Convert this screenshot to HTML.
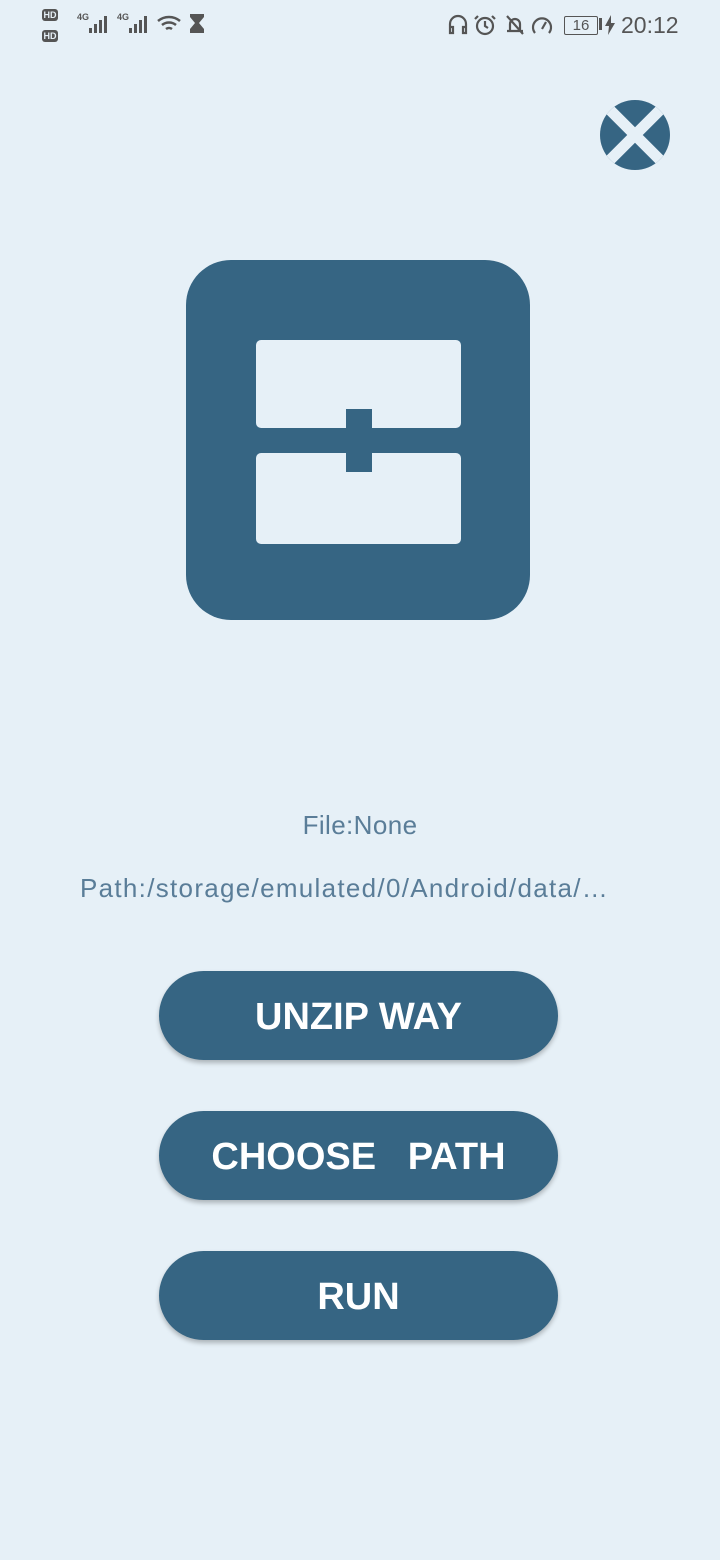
<!DOCTYPE html>
<html><head><meta charset="utf-8"><style>
html,body{margin:0;padding:0;}
body{width:720px;height:1560px;background:#e6f0f7;position:relative;overflow:hidden;font-family:"Liberation Sans",sans-serif;}
.sb{position:absolute;top:0;left:0;width:720px;height:50px;color:#555;}
.txt{position:absolute;left:0;width:720px;text-align:center;color:#5a7d98;font-size:26px;}
.btn{position:absolute;left:159px;width:399px;height:89px;border-radius:45px;background:#366583;color:#fff;font-size:38px;font-weight:bold;text-align:center;line-height:93px;box-shadow:0 3px 5px rgba(0,0,0,0.25);}
</style></head><body>
<div class="sb">
<div style="position:absolute;left:42px;top:9px;width:16px;height:12px;background:#555;border-radius:3px;color:#e6f0f7;font-size:9px;font-weight:bold;line-height:12px;text-align:center">HD</div>
<div style="position:absolute;left:42px;top:30px;width:16px;height:12px;background:#555;border-radius:3px;color:#e6f0f7;font-size:9px;font-weight:bold;line-height:12px;text-align:center">HD</div>
<div style="position:absolute;left:77px;top:12px;font-size:9px;font-weight:bold">4G</div>
<svg style="position:absolute;left:88px;top:14px" width="24" height="20"><rect x="1" y="14" width="3" height="5" fill="#555"/><rect x="6" y="10" width="3" height="9" fill="#555"/><rect x="11" y="6" width="3" height="13" fill="#555"/><rect x="16" y="2" width="3" height="17" fill="#555"/></svg>
<div style="position:absolute;left:117px;top:12px;font-size:9px;font-weight:bold">4G</div>
<svg style="position:absolute;left:128px;top:14px" width="24" height="20"><rect x="1" y="14" width="3" height="5" fill="#555"/><rect x="6" y="10" width="3" height="9" fill="#555"/><rect x="11" y="6" width="3" height="13" fill="#555"/><rect x="16" y="2" width="3" height="17" fill="#555"/></svg>
<svg style="position:absolute;left:156px;top:12px" width="28" height="24" fill="none" stroke="#555" stroke-width="2.5"><path d="M2 9a17 17 0 0 1 22 0M6 13a11 11 0 0 1 14 0M10 17a5 5 0 0 1 6 0"/></svg>
<svg style="position:absolute;left:189px;top:13px" width="16" height="22" fill="#555"><path d="M1 1h14v3l-5 6 5 6v4H1v-4l5-6-5-6z"/></svg>
<svg style="position:absolute;left:447px;top:13px" width="110" height="24" fill="none" stroke="#555" stroke-width="2.2"><path d="M3 16v-5a8 8 0 0 1 16 0v5M3 14h3v6H3zM16 14h3v6h-3z"/><circle cx="38" cy="13" r="8"/><path d="M38 8v5l3 2M31 3l-3 3M45 3l3 3"/><path d="M60 18h16M63 18v-7a5 5 0 0 1 10 0v7M60 3l16 18"/><path d="M88 20a9 9 0 1 1 14 0M95 16l4-7"/></svg>
<div style="position:absolute;left:564px;top:16px;width:32px;height:17px;border:1.5px solid #555;border-radius:2px;font-size:15px;line-height:17px;text-align:center">16</div>
<div style="position:absolute;left:599px;top:18px;width:3px;height:12px;background:#555"></div>
<svg style="position:absolute;left:604px;top:15px" width="12" height="20" fill="#555"><path d="M7 0L1 11h4l-1 9 7-12H7z"/></svg>
<div style="position:absolute;left:621px;top:12px;font-size:23px;color:#555">20:12</div>
</div>

<svg style="position:absolute;left:600px;top:100px" width="70" height="70"><defs><clipPath id="c"><circle cx="35" cy="35" r="35"/></clipPath></defs><circle cx="35" cy="35" r="35" fill="#366583"/><g clip-path="url(#c)" stroke="#e6f0f7" stroke-width="11"><path d="M5 5L65 65M65 5L5 65"/></g></svg>

<svg style="position:absolute;left:186px;top:260px" width="344" height="360"><rect width="344" height="360" rx="45" fill="#366583"/><rect x="70" y="80" width="205" height="88" rx="5" fill="#e6f0f7"/><rect x="70" y="193" width="205" height="91" rx="5" fill="#e6f0f7"/><rect x="70" y="168" width="205" height="25" fill="#366583"/><rect x="160" y="149" width="26" height="63" fill="#366583"/></svg>

<div class="txt" style="top:810px;letter-spacing:0.4px">File:None</div>
<div class="txt" style="top:873px;left:80px;width:auto;text-align:left;letter-spacing:1.3px">Path:/storage/emulated/0/Android/data/…</div>

<div class="btn" style="top:971px">UNZIP WAY</div>
<div class="btn" style="top:1111px">CHOOSE&nbsp;&nbsp; PATH</div>
<div class="btn" style="top:1251px">RUN</div>
</body></html>
